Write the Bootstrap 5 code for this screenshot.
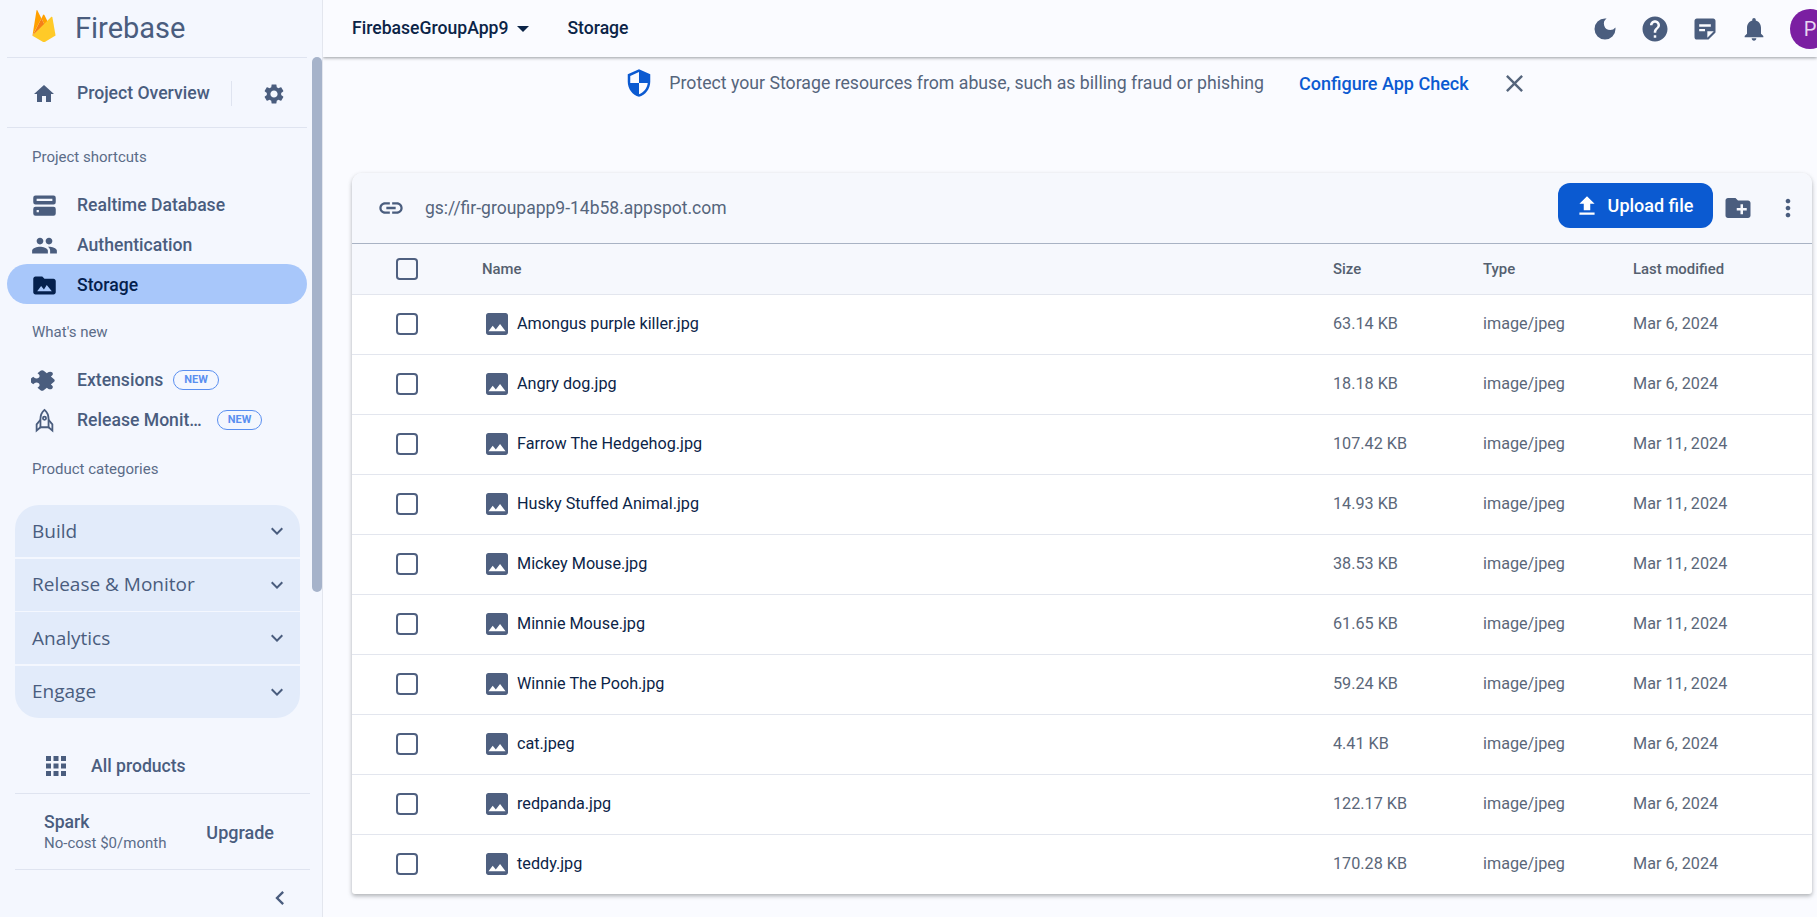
<!DOCTYPE html>
<html lang="en">
<head>
  <meta charset="UTF-8">
  <title>Storage - Firebase console</title>
  <link href="https://cdn.jsdelivr.net/npm/bootstrap@5.3.2/dist/css/bootstrap.min.css" rel="stylesheet">
  <style>
    html, body { height: 917px; overflow: hidden; }
    body { font-family: Roboto, "Liberation Sans", sans-serif; background: #fafbff; color: #0b2447; font-size: 17.6px; }
    svg { fill: currentColor; flex: none; display: block; }

    /* sidebar */
    .fb-side { width: 323px; height: 917px; flex: none; background: #f4f7fe; border-right: 1px solid #e3e6ee; position: relative; color: #4a5d7e; }
    .fb-brand { height: 58px; margin: 0 15px 0 7px; padding-left: 25px; border-bottom: 1px solid #dfe4f0; gap: 19px; font-size: 29px; line-height: 1; }
    .fb-brand svg { margin-top: -6px; }
    .fb-overview { height: 70px; margin: 0 15px 0 7px; padding: 2px 0 0 25px; border-bottom: 1px solid #dfe4f0; font-weight: 500; }
    .fb-overview .fb-rule { width: 1px; height: 25px; background: #dfe4f0; margin: 0 30px 0 auto; }
    .fb-overview svg.gear { margin-right: 21px; }
    .fb-overview .title { margin-left: 21px; }
    .fb-label { font-size: 15px; line-height: 20px; padding-left: 32px; color: #5b6c88; }
    .fb-link { height: 40px; margin: 0 15px 0 7px; padding: 2px 0 0 25px; border-radius: 20px; font-weight: 500; gap: 20px; white-space: nowrap; }
    .fb-link > svg { width: 27px; height: 27px; margin: 0 -1px; }
    .fb-link.is-active { background: #a8c7fa; color: #04204d; }
    .fb-new { font-size: 11px; font-weight: 700; line-height: 18px; height: 20px; padding: 0 10px; border: 1px solid #5a8ff0; border-radius: 10px; color: #5a8ff0; margin-left: -10px; }
    .fb-cats { margin: 0 22px 0 15px; border-radius: 24px; overflow: hidden; }
    .fb-cat { height: 52px; background: #e2ebfa; margin-bottom: 1.5px; padding: 0 11px 0 17px; font-family: "Open Sans", sans-serif; font-size: 19px; font-weight: 500; }
    .fb-cat:last-child { margin-bottom: 0; }
    .fb-all { height: 54px; margin: 22px 12px 0 15px; padding-left: 31px; gap: 23px; border-bottom: 1px solid #dfe4f0; font-weight: 500; }
    .fb-plan { height: 76px; margin: 0 12px 0 15px; padding: 2px 36px 0 29px; border-bottom: 1px solid #dfe4f0; }
    .fb-plan .plan-name { font-weight: 500; line-height: 22px; }
    .fb-plan .plan-cost { font-size: 15px; line-height: 20px; color: #5b6c88; }
    .fb-plan .plan-up { font-weight: 500; font-size: 18px; }
    .fb-thumb { position: absolute; top: 57px; right: 0; width: 10px; height: 535px; border-radius: 5px; background: #a6b3ca; }

    /* top bar */
    .fb-main { min-width: 0; }
    .fb-top { height: 57px; background: #fafbff; box-shadow: 0 1px 3px rgba(60, 64, 67, .5); padding-left: 29px; font-weight: 500; color: #0b2447; }
    .fb-caret { width: 0; height: 0; border: 6.5px solid transparent; border-top-color: #0b2447; border-bottom: 0; margin: 0 38px 0 9px; }
    .fb-actions { margin-left: auto; gap: 21px; color: #4a5d7e; }
    .fb-avatar { width: 40px; height: 40px; border-radius: 50%; background: #7b1fa2; color: #e9d5f2; font-size: 20px; font-weight: 400; text-align: center; margin: 0 -13px 0 1px; line-height: 40px; }

    /* banner */
    .fb-banner { height: 52px; padding-left: 13px; color: #55657c; font-size: 17.7px; }
    .fb-banner .shield { color: #0b5ad1; margin-right: 15px; }
    .fb-banner a { color: #0b5ad1; font-weight: 500; font-size: 18px; text-decoration: none; margin: 0 31px 0 35px; }
    .fb-banner .dismiss { color: #55657c; }

    /* file card */
    .fb-card { width: 1460px; margin: 64px 0 0 29px; border-radius: 10px 10px 3px 3px; overflow: hidden; border: 0; box-shadow: 0 2px 4px rgba(60, 64, 67, .4); background: #fff; }
    .fb-bar { height: 71px; background: #f6f8fd; border-bottom: 1px solid #a9b3c4; padding: 0 10px 0 25px; }
    .fb-bar .url { color: #55657c; margin-left: 20px; font-size: 17.5px; }
    .fb-upload { height: 45px; width: 155px; margin-left: auto; margin-top: -5px; background: #0b5ad1; border: 0; border-radius: 12px; color: #fff; font-weight: 500; font-size: 18px; gap: 8px; }
    .fb-upload:hover { background: #0b5ad1; color: #fff; }
    .fb-upload span { margin-right: 4px; }
    .fb-bar .tool { color: #4a5d7e; }
    .fb-bar .add-folder { margin-left: 10px; }
    .fb-bar .more { margin-left: 21px; }
    .fb-files { margin: 0; table-layout: fixed; }
    .fb-files th, .fb-files td { padding: 0; vertical-align: middle; border-color: #e3e6ee; box-shadow: none; }
    .fb-files thead th { height: 50px; background: #f6f8fd; font-size: 14.9px; font-weight: 500; color: #55606f; }
    .fb-files tbody td { height: 60px; font-size: 16.2px; color: #5b6779; }
    .fb-files tbody tr:last-child td { border-bottom: 0; }
    .fb-files .fname { color: #0b2447; gap: 9px; padding-left: 4px; }
    .fb-files .fname svg { color: #4f6080; }
    .col-tick { width: 130px; padding-left: 44px !important; }
    .col-size, .col-type { width: 150px; }
    .col-mod { width: 179px; }
    .fb-tick { display: block; width: 22px; height: 22px; margin: 0; border: 2px solid #4f6080; border-radius: 2px; background-color: transparent; }
  </style>
</head>
<body>

<!-- icon set -->
<svg width="0" height="0" class="position-absolute">
  <symbol id="i-image" viewBox="3 3 18 18"><path d="M21 19V5c0-1.100-.9-2-2-2H5c-1.100 0-2 .9-2 2v14c0 1.100.9 2 2 2h14c1.100 0 2-.9 2-2zM8.500 13.500l2.500 3.010L14.500 12l4.500 6H5l3.500-4.500z"/></symbol>
  <symbol id="i-chev" viewBox="0 0 24 24"><path d="M7.410 8.590 12 13.170l4.590-4.580L18 10l-6 6-6-6z"/></symbol>
</svg>

<div class="d-flex">
  <aside class="fb-side d-flex flex-column">
    <div class="fb-brand d-flex align-items-center">
      <svg width="24" height="32" viewBox="4 0 24 32">
        <path fill="#ffa000" d="M19.620 11.558l-3.203 2.980-2.972-5.995 1.538-3.448c.4-.7 1.024-.692 1.414 0z"/>
        <path fill="#f57f17" d="M13.445 8.543l2.972 5.995-11.970 11.135z"/>
        <path fill="#ffca28" d="M23.123 7.003c.572-.55 1.164-.362 1.315.417l3.116 18.105-10.328 6.200c-.36.2-1.320.286-1.320.286s-.874-.104-1.207-.3L4.447 25.673z"/>
        <path fill="#ffa000" d="M13.445 8.543l-8.997 17.130L8.455.638c.148-.78.592-.855.988-.167z"/>
      </svg>
      <span>Firebase</span>
    </div>
    <div class="fb-overview d-flex align-items-center">
      <svg width="24" height="24" viewBox="0 0 24 24"><path d="M10 20v-6h4v6h5v-8h3L12 3 2 12h3v8z"/></svg>
      <span class="title">Project Overview</span>
      <span class="fb-rule"></span>
      <svg class="gear" width="24" height="24" viewBox="0 0 24 24"><path d="M19.140 12.940c.04-.3.06-.61.06-.94 0-.32-.02-.64-.07-.94l2.030-1.580c.18-.14.23-.41.12-.61l-1.920-3.320c-.12-.22-.37-.29-.59-.22l-2.390.96c-.5-.38-1.030-.7-1.620-.94l-.36-2.540c-.04-.24-.24-.41-.48-.41h-3.840c-.24 0-.43.17-.47.41l-.36 2.540c-.59.24-1.130.57-1.620.94l-2.390-.96c-.22-.08-.47 0-.59.22L2.740 8.870c-.12.21-.08.47.12.61l2.030 1.580c-.05.3-.09.63-.09.94s.02.64.07.94l-2.030 1.580c-.18.14-.23.41-.12.61l1.920 3.320c.12.22.37.29.59.22l2.390-.96c.5.38 1.030.7 1.620.94l.36 2.540c.05.24.24.41.48.41h3.840c.24 0 .44-.17.47-.41l.36-2.540c.59-.24 1.130-.56 1.620-.94l2.390.96c.22.08.47 0 .59-.22l1.920-3.320c.12-.22.07-.47-.12-.61l-2.010-1.580zM12 15.600c-1.980 0-3.600-1.620-3.600-3.600s1.620-3.600 3.600-3.600 3.600 1.620 3.600 3.600-1.620 3.600-3.600 3.600z"/></svg>
    </div>

    <div class="fb-label" style="margin-top: 19px; margin-bottom: 17px;">Project shortcuts</div>
    <div class="fb-link d-flex align-items-center">
      <svg viewBox="0 0 24 24"><path fill-rule="evenodd" d="M4 3h16a2 2 0 0 1 2 2v4a2 2 0 0 1-2 2H4a2 2 0 0 1-2-2V5a2 2 0 0 1 2-2zm1 3v2h14V6H5zM4 13h16a2 2 0 0 1 2 2v4a2 2 0 0 1-2 2H4a2 2 0 0 1-2-2v-4a2 2 0 0 1 2-2zm1 3v2h2v-2H5z"/></svg>
      <span>Realtime Database</span>
    </div>
    <div class="fb-link d-flex align-items-center">
      <svg viewBox="0 0 24 24"><path d="M16 11c1.660 0 2.990-1.340 2.990-3S17.660 5 16 5c-1.660 0-3 1.340-3 3s1.340 3 3 3zm-8 0c1.660 0 2.990-1.340 2.990-3S9.660 5 8 5C6.340 5 5 6.340 5 8s1.340 3 3 3zm0 2c-2.330 0-7 1.170-7 3.500V19h14v-2.500c0-2.330-4.670-3.500-7-3.500zm8 0c-.29 0-.62.02-.97.05 1.160.84 1.970 1.970 1.970 3.450V19h6v-2.500c0-2.330-4.670-3.500-7-3.500z"/></svg>
      <span>Authentication</span>
    </div>
    <div class="fb-link is-active d-flex align-items-center">
      <svg viewBox="0 0 24 24"><path d="M10 4H4c-1.100 0-2 .9-2 2v12c0 1.100.9 2 2 2h16c1.100 0 2-.9 2-2V8c0-1.100-.9-2-2-2h-8l-2-2zM5.500 17l3.500-4.500 2.500 3 2.500-4 4.500 5.500h-13z"/></svg>
      <span>Storage</span>
    </div>

    <div class="fb-label" style="margin-top: 18px; margin-bottom: 17px;">What's new</div>
    <div class="fb-link d-flex align-items-center">
      <svg viewBox="0 0 24 24"><path transform="translate(12 12) scale(1 .82) rotate(45) translate(-12 -12)" d="M20.500 11H19V7c0-1.100-.9-2-2-2h-4V3.500C13 2.120 11.880 1 10.500 1S8 2.120 8 3.500V5H4c-1.100 0-1.990.9-1.990 2v3.800H3.500c1.490 0 2.700 1.210 2.700 2.700s-1.210 2.700-2.700 2.700H2V20c0 1.100.9 2 2 2h3.800v-1.500c0-1.490 1.210-2.700 2.700-2.700 1.490 0 2.700 1.210 2.700 2.700V22H17c1.100 0 2-.9 2-2v-4h1.500c1.380 0 2.500-1.120 2.500-2.500S21.880 11 20.500 11z"/></svg>
      <span>Extensions</span>
      <span class="fb-new">NEW</span>
    </div>
    <div class="fb-link d-flex align-items-center">
      <svg viewBox="0 0 24 24" style="fill: none; stroke: currentColor; stroke-width: 1.600;"><path d="M12 2.500c2.600 2.200 3.600 5 3.600 8v7.500H8.400v-7.500c0-3 1-5.800 3.600-8z"/><path d="M8.400 11.500 5 15.500V21l3.400-3M15.600 11.500l3.400 4V21l-3.400-3"/><circle cx="12" cy="10" r="1.400"/></svg>
      <span>Release Monit…</span>
      <span class="fb-new" style="margin-left: -5px;">NEW</span>
    </div>

    <div class="fb-label" style="margin-top: 20px; margin-bottom: 26px;">Product categories</div>
    <div class="fb-cats">
      <div class="fb-cat d-flex align-items-center justify-content-between"><span>Build</span><svg width="24" height="24"><use href="#i-chev"/></svg></div>
      <div class="fb-cat d-flex align-items-center justify-content-between"><span>Release &amp; Monitor</span><svg width="24" height="24"><use href="#i-chev"/></svg></div>
      <div class="fb-cat d-flex align-items-center justify-content-between"><span>Analytics</span><svg width="24" height="24"><use href="#i-chev"/></svg></div>
      <div class="fb-cat d-flex align-items-center justify-content-between"><span>Engage</span><svg width="24" height="24"><use href="#i-chev"/></svg></div>
    </div>

    <div class="fb-all d-flex align-items-center">
      <svg width="30" height="30" viewBox="0 0 24 24" style="margin-left: -5px; margin-right: -3px;"><path d="M4 8h4V4H4v4zm6 12h4v-4h-4v4zm-6 0h4v-4H4v4zm0-6h4v-4H4v4zm6 0h4v-4h-4v4zm6-10v4h4V4h-4zm-6 4h4V4h-4v4zm6 6h4v-4h-4v4zm0 6h4v-4h-4v4z"/></svg>
      <span>All products</span>
    </div>
    <div class="fb-plan d-flex align-items-center justify-content-between">
      <div>
        <div class="plan-name">Spark</div>
        <div class="plan-cost">No-cost $0/month</div>
      </div>
      <div class="plan-up">Upgrade</div>
    </div>
    <div class="d-flex justify-content-end" style="padding: 14px 28px 0 0;">
      <svg width="28" height="28" viewBox="0 0 24 24"><path d="M15.410 7.410 14 6l-6 6 6 6 1.410-1.410L10.830 12z"/></svg>
    </div>
    <div class="fb-thumb"></div>
  </aside>

  <main class="fb-main flex-grow-1">
    <div class="fb-top d-flex align-items-center">
      <span>FirebaseGroupApp9</span>
      <span class="fb-caret"></span>
      <span>Storage</span>
      <div class="fb-actions d-flex align-items-center">
        <svg width="28" height="28" viewBox="0 0 24 24"><path d="M12 3a9 9 0 1 0 9 9c0-.46-.04-.92-.1-1.360a5.389 5.389 0 0 1-4.400 2.260 5.403 5.403 0 0 1-3.140-9.800c-.44-.06-.9-.1-1.360-.1z"/></svg>
        <svg width="30" height="30" viewBox="0 0 24 24"><path d="M12 2C6.480 2 2 6.480 2 12s4.480 10 10 10 10-4.480 10-10S17.520 2 12 2zm1 17h-2v-2h2v2zm2.070-7.750-.9.92C13.450 12.900 13 13.500 13 15h-2v-.5c0-1.100.45-2.100 1.170-2.830l1.240-1.260c.37-.36.59-.86.59-1.410 0-1.100-.9-2-2-2s-2 .9-2 2H8c0-2.210 1.790-4 4-4s4 1.790 4 4c0 .88-.36 1.680-.93 2.250z"/></svg>
        <svg width="28" height="28" viewBox="0 0 24 24"><path d="M19 3H4.990C3.890 3 3 3.900 3 5l.01 14c0 1.100.89 2 1.990 2h10l6-6V5c0-1.100-.9-2-2-2zM7 8h10v2H7V8zm5 6H7v-2h5v2zm2 5.500V14h5.500L14 19.500z"/></svg>
        <svg width="28" height="28" viewBox="0 0 24 24"><path d="M12 22c1.100 0 2-.9 2-2h-4c0 1.100.9 2 2 2zm6-6v-5c0-3.070-1.630-5.640-4.500-6.320V4c0-.83-.67-1.500-1.500-1.500s-1.500.67-1.500 1.500v.68C7.640 5.360 6 7.920 6 11v5l-2 2v1h16v-1l-2-2z"/></svg>
        <div class="fb-avatar">P</div>
      </div>
    </div>

    <div class="fb-banner d-flex align-items-center justify-content-center">
      <svg class="shield" width="30" height="30" viewBox="0 0 24 24"><path d="M12 1 3 5v6c0 5.550 3.840 10.740 9 12 5.160-1.260 9-6.450 9-12V5l-9-4zm0 10.990h7c-.53 4.120-3.280 7.790-7 8.940V12H5V6.300l7-3.110v8.800z"/></svg>
      <span>Protect your Storage resources from abuse, such as billing fraud or phishing</span>
      <a href="#">Configure App Check</a>
      <svg class="dismiss" width="29" height="29" viewBox="0 0 24 24"><path d="M19 6.410 17.590 5 12 10.590 6.410 5 5 6.410 10.590 12 5 17.590 6.410 19 12 13.410 17.590 19 19 17.590 13.410 12z"/></svg>
    </div>

    <div class="card fb-card">
      <div class="fb-bar d-flex align-items-center">
        <svg class="tool" width="28" height="28" viewBox="0 0 24 24"><path d="M3.900 12c0-1.710 1.390-3.100 3.100-3.100h4V7H7c-2.760 0-5 2.240-5 5s2.240 5 5 5h4v-1.900H7c-1.710 0-3.100-1.390-3.100-3.100zM8 13h8v-2H8v2zm9-6h-4v1.900h4c1.710 0 3.100 1.390 3.100 3.100s-1.390 3.100-3.100 3.100h-4V17h4c2.760 0 5-2.240 5-5s-2.240-5-5-5z"/></svg>
        <span class="url">gs://fir-groupapp9-14b58.appspot.com</span>
        <button class="btn fb-upload d-flex align-items-center justify-content-center p-0">
          <svg width="26" height="26" viewBox="0 0 24 24"><path d="M9 16h6v-6h4l-7-7-7 7h4zm-4 2h14v2H5z"/></svg>
          <span>Upload file</span>
        </button>
        <svg class="tool add-folder" width="30" height="30" viewBox="0 0 24 24"><path d="M20 6h-8l-2-2H4c-1.110 0-1.990.89-1.990 2L2 18c0 1.110.89 2 2 2h16c1.110 0 2-.89 2-2V8c0-1.110-.89-2-2-2zm-1 8h-3v3h-2v-3h-3v-2h3V9h2v3h3v2z"/></svg>
        <svg class="tool more" width="28" height="28" viewBox="0 0 24 24"><path d="M12 8c1.100 0 2-.9 2-2s-.9-2-2-2-2 .9-2 2 .9 2 2 2zm0 2c-1.100 0-2 .9-2 2s.9 2 2 2 2-.9 2-2-.9-2-2-2zm0 6c-1.100 0-2 .9-2 2s.9 2 2 2 2-.9 2-2-.9-2-2-2z"/></svg>
      </div>
      <table class="table fb-files">
        <thead>
          <tr>
            <th class="col-tick"><input class="form-check-input fb-tick" type="checkbox"></th>
            <th>Name</th>
            <th class="col-size">Size</th>
            <th class="col-type">Type</th>
            <th class="col-mod">Last modified</th>
          </tr>
        </thead>
        <tbody id="rows"></tbody>
      </table>
    </div>
  </main>
</div>

<script src="https://cdn.jsdelivr.net/npm/bootstrap@5.3.2/dist/js/bootstrap.bundle.min.js"></script>
<script>
  var files = [
    ["Amongus purple killer.jpg", "63.14 KB", "Mar 6, 2024"],
    ["Angry dog.jpg", "18.18 KB", "Mar 6, 2024"],
    ["Farrow The Hedgehog.jpg", "107.42 KB", "Mar 11, 2024"],
    ["Husky Stuffed Animal.jpg", "14.93 KB", "Mar 11, 2024"],
    ["Mickey Mouse.jpg", "38.53 KB", "Mar 11, 2024"],
    ["Minnie Mouse.jpg", "61.65 KB", "Mar 11, 2024"],
    ["Winnie The Pooh.jpg", "59.24 KB", "Mar 11, 2024"],
    ["cat.jpeg", "4.41 KB", "Mar 6, 2024"],
    ["redpanda.jpg", "122.17 KB", "Mar 6, 2024"],
    ["teddy.jpg", "170.28 KB", "Mar 6, 2024"]
  ];
  document.getElementById("rows").innerHTML = files.map(function (f) {
    return '<tr><td class="col-tick"><input class="form-check-input fb-tick" type="checkbox"></td>' +
      '<td><div class="fname d-flex align-items-center"><svg width="22" height="22"><use href="#i-image"/></svg>' + f[0] + '</div></td>' +
      '<td>' + f[1] + '</td><td>image/jpeg</td><td>' + f[2] + '</td></tr>';
  }).join("");
</script>
</body>
</html>
